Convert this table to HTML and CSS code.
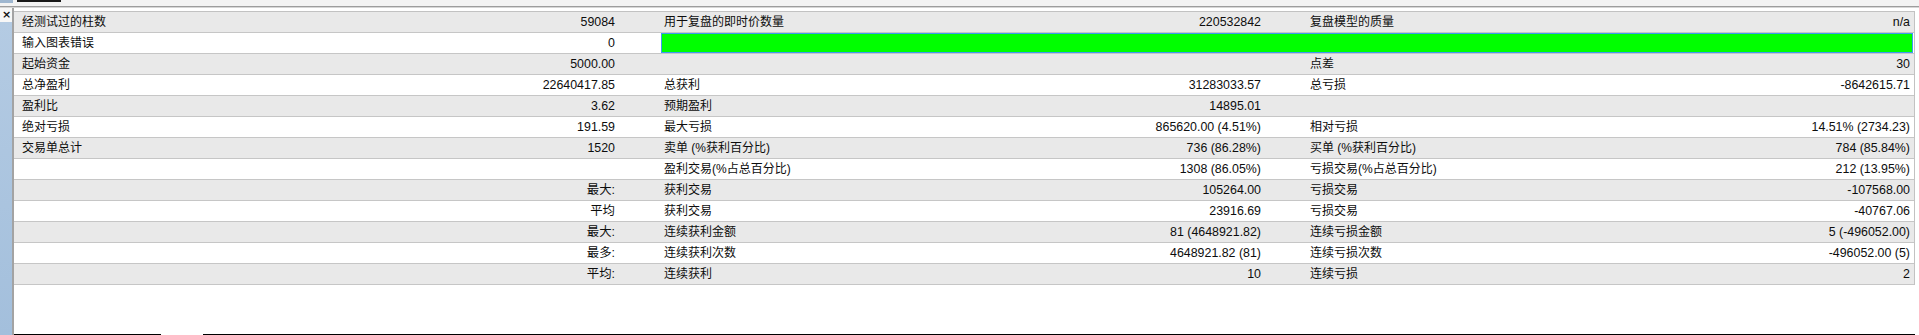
FILE: index.html
```html
<!DOCTYPE html>
<html lang="zh-CN">
<head>
<meta charset="utf-8">
<title>测试报告</title>
<link rel="stylesheet" href="styles.css">
</head>
<body>
<div class="window">
  <div class="topbar"><div class="tab-stub"></div><div class="tab"></div></div>
  <div class="topsep"></div>
  <div class="main">
    <div class="side">
      <div class="close">×</div>
      <div class="side-panel"></div>
    </div>
    <div class="content">
      <div class="report">
        <div class="row odd"><span class="lbl first">经测试过的柱数</span><span class="val">59084</span><span class="lbl">用于复盘的即时价数量</span><span class="val">220532842</span><span class="lbl">复盘模型的质量</span><span class="val last">n/a</span></div>
        <div class="row"><span class="lbl first">输入图表错误</span><span class="val">0</span><div class="bar"></div></div>
        <div class="row odd"><span class="lbl first">起始资金</span><span class="val">5000.00</span><span class="lbl"></span><span class="val"></span><span class="lbl">点差</span><span class="val last">30</span></div>
        <div class="row"><span class="lbl first">总净盈利</span><span class="val">22640417.85</span><span class="lbl">总获利</span><span class="val">31283033.57</span><span class="lbl">总亏损</span><span class="val last">-8642615.71</span></div>
        <div class="row odd"><span class="lbl first">盈利比</span><span class="val">3.62</span><span class="lbl">预期盈利</span><span class="val">14895.01</span><span class="lbl"></span><span class="val last"></span></div>
        <div class="row"><span class="lbl first">绝对亏损</span><span class="val">191.59</span><span class="lbl">最大亏损</span><span class="val">865620.00 (4.51%)</span><span class="lbl">相对亏损</span><span class="val last">14.51% (2734.23)</span></div>
        <div class="row odd"><span class="lbl first">交易单总计</span><span class="val">1520</span><span class="lbl">卖单 (%获利百分比)</span><span class="val">736 (86.28%)</span><span class="lbl">买单 (%获利百分比)</span><span class="val last">784 (85.84%)</span></div>
        <div class="row"><span class="lbl first"></span><span class="val"></span><span class="lbl">盈利交易(%占总百分比)</span><span class="val">1308 (86.05%)</span><span class="lbl">亏损交易(%占总百分比)</span><span class="val last">212 (13.95%)</span></div>
        <div class="row odd"><span class="lbl first"></span><span class="val">最大:</span><span class="lbl">获利交易</span><span class="val">105264.00</span><span class="lbl">亏损交易</span><span class="val last">-107568.00</span></div>
        <div class="row"><span class="lbl first"></span><span class="val">平均</span><span class="lbl">获利交易</span><span class="val">23916.69</span><span class="lbl">亏损交易</span><span class="val last">-40767.06</span></div>
        <div class="row odd"><span class="lbl first"></span><span class="val">最大:</span><span class="lbl">连续获利金额</span><span class="val">81 (4648921.82)</span><span class="lbl">连续亏损金额</span><span class="val last">5 (-496052.00)</span></div>
        <div class="row"><span class="lbl first"></span><span class="val">最多:</span><span class="lbl">连续获利次数</span><span class="val">4648921.82 (81)</span><span class="lbl">连续亏损次数</span><span class="val last">-496052.00 (5)</span></div>
        <div class="row odd"><span class="lbl first"></span><span class="val">平均:</span><span class="lbl">连续获利</span><span class="val">10</span><span class="lbl">连续亏损</span><span class="val last">2</span></div>
      </div>
      <div class="bottom-line"><div class="seg seg-a"></div><div class="seg-gap"></div><div class="seg seg-b"></div></div>
    </div>
  </div>
</div>
</body>
</html>
```

FILE: styles.css
```css
* { box-sizing: border-box; }
html, body { margin: 0; padding: 0; }
body {
  width: 1919px;
  height: 335px;
  overflow: hidden;
  background: #ffffff;
  font-family: "Liberation Sans", "Noto Sans CJK SC", sans-serif;
  font-size: 12px;
  color: #0d0d0d;
}
.window { display: flex; flex-direction: column; height: 335px; }
.topbar {
  height: 6px;
  background: #f3f3f3;
  display: flex;
  align-items: flex-start;
}
.tab-stub { width: 13px; height: 3px; background: #9fb7d0; margin-right: 4px; }
.tab {
  width: 44px;
  height: 2px;
  background: #1a1a1a;
}
.topsep {
  height: 2px;
  border-top: 1px solid #9d9d9d;
  border-bottom: 1px solid #d6d6d6;
}
.main { flex: 1; display: flex; min-height: 0; }
.side {
  width: 15px;
  display: flex;
  flex-direction: column;
  border-right: 2px solid #a3a3a3;
  background: #f7f7f7;
}
.close {
  height: 14px;
  font-size: 11px;
  line-height: 14px;
  font-weight: bold;
  font-family: "DejaVu Sans", sans-serif;
  text-align: left;
  padding-left: 2px;
  color: #111;
}
.side-panel {
  flex: 1;
  background: linear-gradient(180deg, #b4cbe3 0%, #a3bfdc 100%);
}
.content {
  flex: 1;
  display: flex;
  flex-direction: column;
  padding-top: 3px;
  padding-right: 4px;
}
.report {
  border-top: 1px solid #c2c2c2;
  border-right: 1px solid #c2c2c2;
  width: 1901px;
}
.row {
  display: grid;
  grid-template-columns: 320px 326px 323px 323px 323px 285px;
  height: 21px;
  border-bottom: 1px solid #c6c6c6;
  background: #ffffff;
  align-items: center;
  line-height: 20px;
}
.row.odd { background: #e9e9e9; }
.lbl { padding-left: 4px; white-space: nowrap; }
.lbl.first { padding-left: 8px; }
.val { text-align: right; padding-right: 45px; white-space: nowrap; font-size: 12.4px; }
.val.last { padding-right: 4px; }
.bar {
  grid-column: 3 / 7;
  height: 20px;
  margin: 0 1px 0 1px;
  border: 1px solid #3d9bf0;
  background: #00ff00;
  align-self: start;
}
.bottom-line {
  margin-top: auto;
  height: 1px;
  display: flex;
}
.seg { height: 1px; background: #000; }
.seg-a { width: 147px; }
.seg-gap { width: 42px; }
.seg-b { flex: 1; }
```
